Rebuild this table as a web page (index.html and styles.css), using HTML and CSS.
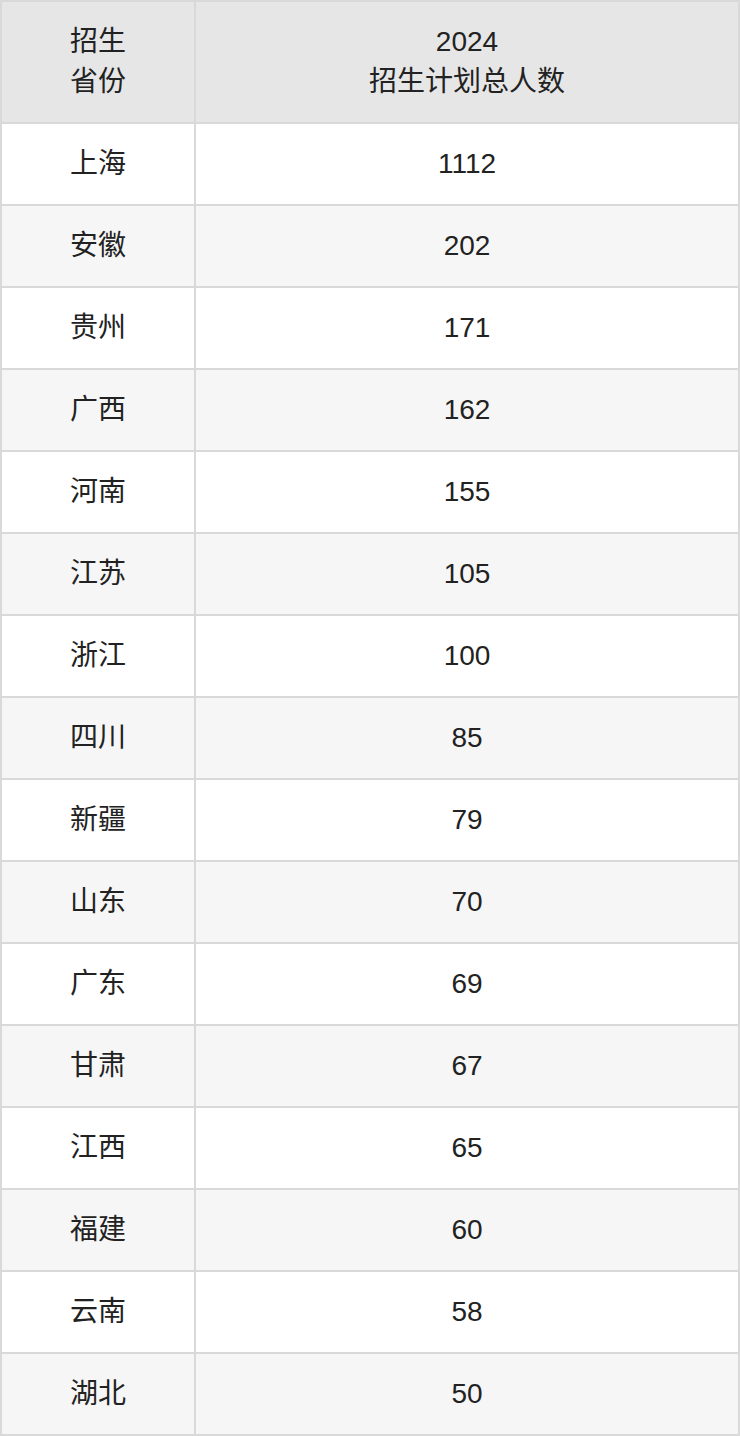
FILE: index.html
```html
<!DOCTYPE html>
<html lang="zh-CN">
<head>
<meta charset="utf-8">
<title>2024 招生计划</title>
<link rel="stylesheet" href="styles.css">
</head>
<body>
<table class="plan">
  <colgroup>
    <col class="col-prov">
    <col class="col-num">
  </colgroup>
  <thead>
    <tr>
      <th>招生<br>省份</th>
      <th>2024<br>招生计划总人数</th>
    </tr>
  </thead>
  <tbody>
    <tr><td>上海</td><td>1112</td></tr>
    <tr><td>安徽</td><td>202</td></tr>
    <tr><td>贵州</td><td>171</td></tr>
    <tr><td>广西</td><td>162</td></tr>
    <tr><td>河南</td><td>155</td></tr>
    <tr><td>江苏</td><td>105</td></tr>
    <tr><td>浙江</td><td>100</td></tr>
    <tr><td>四川</td><td>85</td></tr>
    <tr><td>新疆</td><td>79</td></tr>
    <tr><td>山东</td><td>70</td></tr>
    <tr><td>广东</td><td>69</td></tr>
    <tr><td>甘肃</td><td>67</td></tr>
    <tr><td>江西</td><td>65</td></tr>
    <tr><td>福建</td><td>60</td></tr>
    <tr><td>云南</td><td>58</td></tr>
    <tr><td>湖北</td><td>50</td></tr>
  </tbody>
</table>
</body>
</html>
```
FILE: styles.css
```css
html, body {
  margin: 0;
  padding: 0;
  background: #ffffff;
}

.plan {
  width: 740px;
  border-collapse: collapse;
  table-layout: fixed;
  font-family: "Liberation Sans", "Noto Sans CJK SC", sans-serif;
  font-size: 28px;
  line-height: 40px;
  color: #222222;
}

.col-prov {
  width: 194px;
}

.plan th,
.plan td {
  border: 2px solid #d9d9d9;
  text-align: center;
  vertical-align: middle;
  padding: 20px 0;
  font-weight: normal;
}

.plan th {
  background: #e6e6e6;
}

.plan tbody tr:nth-child(odd) td {
  background: #ffffff;
}

.plan tbody tr:nth-child(even) td {
  background: #f6f6f6;
}
```
